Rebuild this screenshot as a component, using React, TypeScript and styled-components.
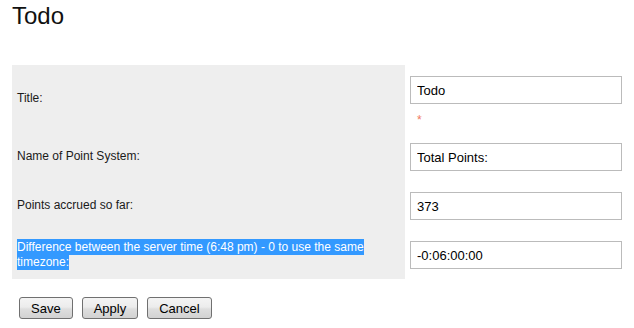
import React from 'react';
import styled, { createGlobalStyle } from 'styled-components';

const GlobalStyle = createGlobalStyle`
  html, body {
    margin: 0;
    padding: 0;
    background: #ffffff;
  }
  body {
    font-family: "Liberation Sans", Arial, sans-serif;
    color: #1a1a1a;
  }
`;

const Page = styled.div`
  width: 634px;
  box-sizing: border-box;
  padding: 0 12px;
`;

const Heading = styled.h1`
  margin: 0 0 35px;
  padding-top: 2px;
  font-size: 24px;
  font-weight: normal;
  color: #111111;
`;

const FormTable = styled.div`
  display: grid;
  grid-template-columns: 393px 1fr;
`;

const LabelCell = styled.div`
  display: flex;
  align-items: center;
  background: #eeeeee;
  padding: 0 5px;
  font-size: 12px;
  line-height: 15px;
`;

const FieldCell = styled.div`
  padding: 11px 0 10px 5px;
`;

const TextInput = styled.input`
  display: block;
  width: 100%;
  height: 28px;
  box-sizing: border-box;
  margin: 0;
  padding: 0 6px;
  border: 1px solid #bbbbbb;
  background: #ffffff;
  font-family: "Liberation Sans", Arial, sans-serif;
  font-size: 13px;
  color: #000000;
  outline: none;
`;

const Required = styled.div`
  height: 18px;
  box-sizing: border-box;
  padding: 10px 0 0 7px;
  font-size: 12px;
  line-height: 12px;
  color: #f07862;
  overflow: visible;
`;

const Selected = styled.span`
  padding: 1px 0;
  background: #3399ff;
  color: #ffffff;
`;

const ButtonBar = styled.div`
  display: flex;
  gap: 9px;
  padding: 18px 0 0 7px;
`;

const Button = styled.button`
  height: 22px;
  margin: 0;
  padding: 0 11px;
  border: 1px solid #707070;
  border-radius: 3px;
  background: linear-gradient(#f4f4f4 0%, #ececec 45%, #dedede 55%, #d2d2d2 100%);
  font-family: "Liberation Sans", Arial, sans-serif;
  font-size: 13px;
  color: #000000;
`;

type Row = {
  label: React.ReactNode;
  value: string;
  required?: boolean;
};

const rows: Row[] = [
  { label: 'Title:', value: 'Todo', required: true },
  { label: 'Name of Point System:', value: 'Total Points:' },
  { label: 'Points accrued so far:', value: '373' },
  {
    label: (
      <Selected>
        Difference between the server time (6:48 pm) - 0 to use the same timezone:
      </Selected>
    ),
    value: '-0:06:00:00',
  },
];

const App = () => {
  return (
    <Page>
      <GlobalStyle />
      <Heading>Todo</Heading>
      <FormTable>
        {rows.map((row, i) => (
          <React.Fragment key={i}>
            <LabelCell>
              <div>{row.label}</div>
            </LabelCell>
            <FieldCell>
              <TextInput type="text" defaultValue={row.value} />
              {row.required && <Required>*</Required>}
            </FieldCell>
          </React.Fragment>
        ))}
      </FormTable>
      <ButtonBar>
        <Button>Save</Button>
        <Button>Apply</Button>
        <Button>Cancel</Button>
      </ButtonBar>
    </Page>
  );
};

export default App;
